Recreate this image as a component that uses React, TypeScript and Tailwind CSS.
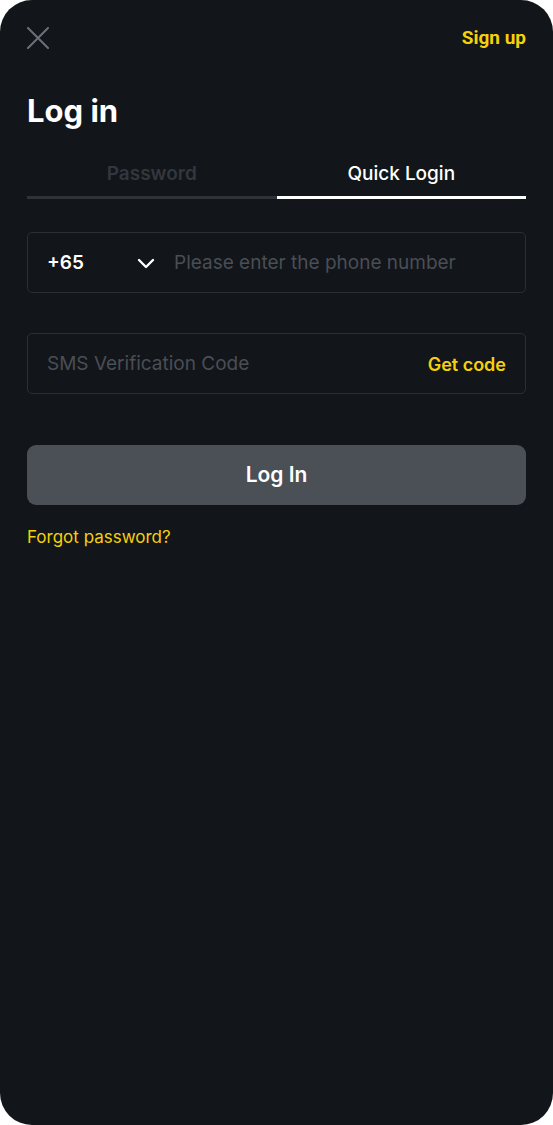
const YELLOW = "text-[#f5d10a]";

export default function App() {
  return (
    <div className="min-h-[1125px] w-full bg-white">
      <div
        className="flex h-[1125px] w-full flex-col overflow-hidden rounded-[32px] bg-[#12151a] px-[27px]"
        style={{ fontFamily: "Inter, 'Noto Sans', sans-serif" }}
      >
        {/* top bar */}
        <div className="flex h-[78px] items-center justify-between pb-[2px]">
          <svg width="22" height="22" viewBox="0 0 22 22" className="text-[#6b7079]">
            <path d="M1 1L21 21M21 1L1 21" stroke="currentColor" strokeWidth="2" strokeLinecap="round" />
          </svg>
          <button
            className={`text-[19px] font-bold ${YELLOW}`}
            style={{ fontFamily: "Roboto, sans-serif" }}
          >
            Sign up
          </button>
        </div>

        <h1 className="mt-[13px] text-[31px] leading-[40px] font-bold text-white">Log in</h1>

        {/* tabs */}
        <div className="mt-[31px] grid grid-cols-2">
          <div className="flex flex-col">
            <span className="pb-[10px] text-center text-[19px] leading-[24px] font-semibold text-[#33373e]">
              Password
            </span>
            <div className="h-[3px] bg-[#2f3238]" />
          </div>
          <div className="flex flex-col">
            <span className="pb-[10px] text-center text-[19px] leading-[24px] font-medium text-white">
              Quick Login
            </span>
            <div className="h-[3px] bg-white" />
          </div>
        </div>

        {/* phone */}
        <div className="mt-[33px] flex h-[61px] items-center rounded-[5px] border border-[#2b2f35] px-[19px] pt-[2px]">
          <span className="w-[90px] text-[19px] font-semibold text-white">+65</span>
          <svg width="18" height="11" viewBox="0 0 18 11" className="text-white">
            <path
              d="M2 2L9 9L16 2"
              fill="none"
              stroke="currentColor"
              strokeWidth="2.4"
              strokeLinecap="round"
              strokeLinejoin="round"
            />
          </svg>
          <span className="ml-[19px] text-[19px] text-[#4a4e55]">Please enter the phone number</span>
        </div>

        {/* sms */}
        <div className="mt-[40px] flex h-[61px] items-center justify-between rounded-[5px] border border-[#2b2f35] px-[19px] pt-[2px]">
          <span className="text-[19px] text-[#4a4e55]">SMS Verification Code</span>
          <span className={`text-[18px] font-semibold ${YELLOW}`}>Get code</span>
        </div>

        <button className="mt-[51px] flex h-[60px] items-center justify-center rounded-[9px] bg-[#4b4f56] text-[21px] font-semibold text-white">
          Log In
        </button>

        <a className={`mt-[20px] text-[17px] ${YELLOW}`}>Forgot password?</a>
      </div>
    </div>
  );
}
